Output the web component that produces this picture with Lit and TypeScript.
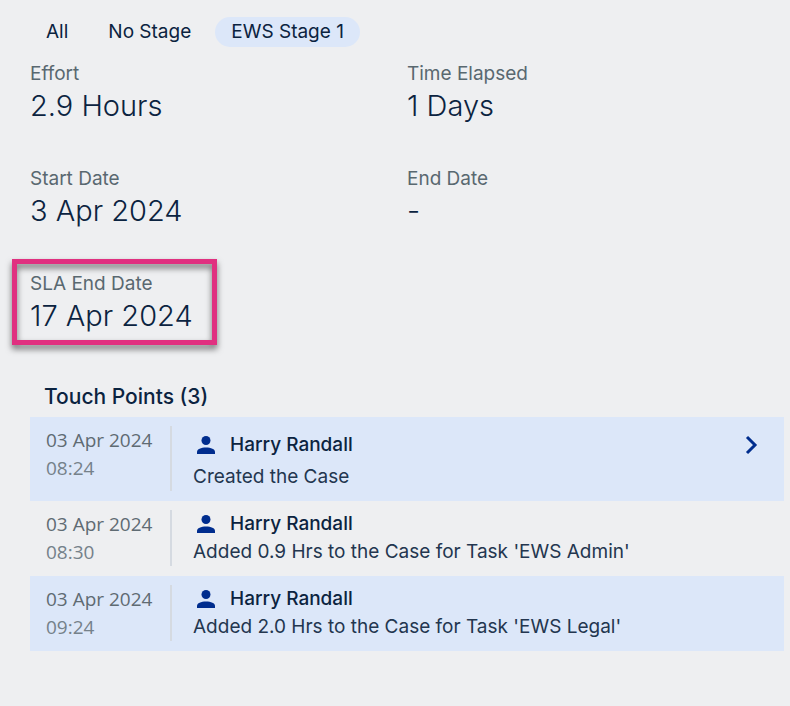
import { LitElement, html, css, svg } from "lit";
import { customElement, property, state } from "lit/decorators.js";
import { classMap } from "lit/directives/class-map.js";

interface Stat {
  label: string;
  value: string;
  marked?: boolean;
}

interface TouchPoint {
  date: string;
  time: string;
  iso: string;
  who: string;
  text: string;
  link?: boolean;
}

const STAGES = ["All", "No Stage", "EWS Stage 1"];

const STATS: Stat[] = [
  { label: "Effort", value: "2.9 Hours" },
  { label: "Time Elapsed", value: "1 Days" },
  { label: "Start Date", value: "3 Apr 2024" },
  { label: "End Date", value: "-" },
  { label: "SLA End Date", value: "17 Apr 2024", marked: true },
];

const POINTS: TouchPoint[] = [
  { date: "03 Apr 2024", time: "08:24", iso: "2024-04-03T08:24", who: "Harry Randall", text: "Created the Case", link: true },
  { date: "03 Apr 2024", time: "08:30", iso: "2024-04-03T08:30", who: "Harry Randall", text: "Added 0.9 Hrs to the Case for Task 'EWS Admin'" },
  { date: "03 Apr 2024", time: "09:24", iso: "2024-04-03T09:24", who: "Harry Randall", text: "Added 2.0 Hrs to the Case for Task 'EWS Legal'" },
];

const personShape = svg`<circle cx="9" cy="4.500" r="4.500"/><path d="M0 18v-2C0 13 4 11.500 9 11.500s9 1.500 9 4.500v2z"/>`;

@customElement("touch-point")
export class TouchPointRow extends LitElement {
  @property({ attribute: false }) point!: TouchPoint;

  static styles = css`
    :host {
      display: block;
    }
    .row {
      display: flex;
      padding: 9px 16px 10px;
    }
    .when {
      flex: none;
      box-sizing: border-box;
      width: 126px;
      border-right: 2px solid #d5dae1;
      font: 19px/28px "Open Sans", "Noto Sans", sans-serif;
      color: #5f6b73;
    }
    .date,
    .time {
      display: block;
    }
    .time {
      color: #75818a;
    }
    .body {
      flex: 1;
      min-width: 0;
      padding-left: 21px;
    }
    .head {
      display: flex;
      align-items: center;
      min-height: 28px;
    }
    .linked {
      min-height: 37px;
    }
    .person {
      flex: none;
      width: 18px;
      height: 18px;
      margin: 0 15px 0 4px;
      fill: #002d8e;
    }
    .who {
      flex: 1;
      font-weight: 500;
    }
    .text {
      margin: 0;
      color: #23364f;
    }
    .open {
      display: flex;
      align-items: center;
      justify-content: center;
      width: 34px;
      height: 34px;
      padding: 0;
      border: 0;
      background: none;
      cursor: pointer;
    }
    .chevron {
      width: 18px;
      height: 20px;
      fill: none;
      stroke: #002d8e;
      stroke-width: 3;
    }
  `;

  render() {
    const p = this.point;
    return html`
      <article class="row">
        <time class="when" datetime=${p.iso}>
          <span class="date">${p.date}</span>
          <span class="time">${p.time}</span>
        </time>
        <div class="body">
          <div class=${classMap({ head: true, linked: !!p.link })}>
            <svg class="person" viewBox="0 0 18 18" aria-hidden="true">${personShape}</svg>
            <span class="who">${p.who}</span>
            ${p.link
              ? html`<button class="open" type="button" aria-label="Open">
                  <svg class="chevron" viewBox="0 0 18 20" aria-hidden="true">
                    <path d="M5 2l8 8-8 8" />
                  </svg>
                </button>`
              : null}
          </div>
          <p class="text">${p.text}</p>
        </div>
      </article>
    `;
  }
}

@customElement("app-root")
export class AppRoot extends LitElement {
  @state() private stage = "EWS Stage 1";

  static styles = css`
    :host {
      display: block;
      box-sizing: border-box;
      min-height: 100vh;
      padding: 17px 6px 24px 30px;
      background: #eeeff1;
      color: #0b2340;
      font: 19px/28px Inter, "Liberation Sans", sans-serif;
    }
    .tabs {
      display: flex;
      flex-wrap: wrap;
      gap: 8px;
    }
    .tab {
      height: 30px;
      padding: 0 16px;
      border: 0;
      border-radius: 15px;
      background: none;
      color: inherit;
      font: inherit;
      cursor: pointer;
    }
    .active {
      background: #dce7f9;
    }
    .stats {
      display: grid;
      grid-template-columns: 1fr 1fr;
      row-gap: 41px;
      margin: 15px 0 46px;
    }
    .stat {
      justify-self: start;
    }
    .label {
      line-height: 24px;
      color: #596870;
    }
    .value {
      margin: 0;
      font-size: 29px;
      line-height: 40px;
      font-weight: 300;
    }
    .marked {
      position: relative;
    }
    .marked::after {
      content: "";
      position: absolute;
      inset: -13px -24px -9px -18px;
      border: 5px solid #e03080;
      filter: drop-shadow(0 4px 3px rgba(0, 0, 0, 0.55));
      pointer-events: none;
    }
    .title {
      margin: 0 14px 5px;
      font-size: 21px;
      line-height: 30px;
      font-weight: 500;
    }
    .points {
      margin: 0;
      padding: 0;
      list-style: none;
    }
    .point:nth-child(odd) {
      background: #dce7f9;
    }
  `;

  render() {
    return html`
      <nav class="tabs" aria-label="Stage">
        ${STAGES.map(
          (s) => html`<button
            type="button"
            class=${classMap({ tab: true, active: s === this.stage })}
            aria-pressed=${s === this.stage}
            @click=${() => (this.stage = s)}
          >${s}</button>`
        )}
      </nav>
      <dl class="stats">
        ${STATS.map(
          (s) => html`<div class=${classMap({ stat: true, marked: !!s.marked })}>
            <dt class="label">${s.label}</dt>
            <dd class="value">${s.value}</dd>
          </div>`
        )}
      </dl>
      <section>
        <h2 class="title">Touch Points (${POINTS.length})</h2>
        <ul class="points">
          ${POINTS.map((p) => html`<li class="point"><touch-point .point=${p}></touch-point></li>`)}
        </ul>
      </section>
    `;
  }
}
